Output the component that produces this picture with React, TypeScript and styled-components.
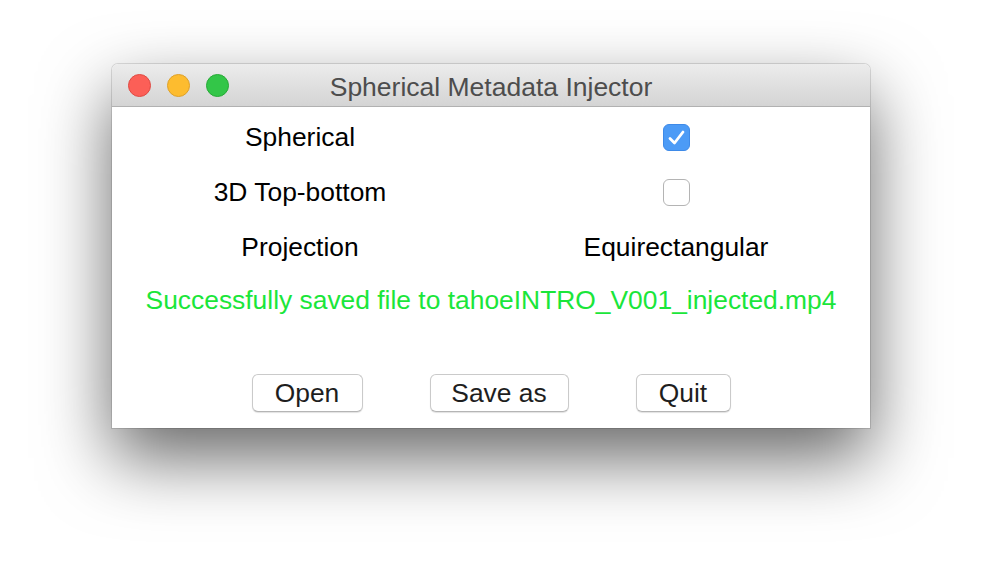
import React from "react";
import styled, { createGlobalStyle } from "styled-components";

const Global = createGlobalStyle`
  html, body { margin: 0; padding: 0; background: #ffffff; }
  body { font-family: "Liberation Sans", Arial, sans-serif; }
`;

const Page = styled.div`
  width: 982px;
  height: 588px;
  padding: 64px 0 0 112px;
  box-sizing: border-box;
  background: #ffffff;
  overflow: hidden;
`;

const Window = styled.div`
  width: 758px;
  height: 364px;
  display: flex;
  flex-direction: column;
  border-radius: 6px 6px 0 0;
  background: #ffffff;
  box-shadow: 0 0 0 1px rgba(0, 0, 0, 0.12), 0 30px 70px rgba(0, 0, 0, 0.6);
`;

const TitleBar = styled.div`
  height: 42px;
  flex: none;
  display: flex;
  align-items: center;
  position: relative;
  border-radius: 6px 6px 0 0;
  background: linear-gradient(#ececec, #d4d4d4);
  border-bottom: 1px solid #b1b1b1;
`;

const Lights = styled.div`
  display: flex;
  gap: 16px;
  padding-left: 16px;
`;

const Light = styled.span<{ $fill: string; $edge: string }>`
  width: 23px;
  height: 23px;
  border-radius: 50%;
  background: ${(p) => p.$fill};
  border: 1px solid ${(p) => p.$edge};
  box-sizing: border-box;
`;

const Title = styled.div`
  position: absolute;
  left: 0;
  right: 0;
  top: 8px;
  text-align: center;
  font-size: 26.5px;
  color: #4d4d4d;
  pointer-events: none;
`;

const Body = styled.div`
  flex: 1;
  display: flex;
  flex-direction: column;
  padding-top: 3px;
`;

const Grid = styled.div`
  display: grid;
  grid-template-columns: 376px 376px;
  grid-auto-rows: 55px;
  align-items: center;
  justify-items: center;
  font-size: 26.4px;
  color: #000000;
`;

const Label = styled.div``;

const Box = styled.div<{ $checked?: boolean }>`
  width: 27px;
  height: 27px;
  box-sizing: border-box;
  border-radius: 6px;
  display: flex;
  align-items: center;
  justify-content: center;
  background: ${(p) => (p.$checked ? "#4c9bf6" : "#ffffff")};
  border: 1px solid ${(p) => (p.$checked ? "#3e8ae8" : "#b4b4b4")};
`;

const Status = styled.div`
  height: 50px;
  display: flex;
  align-items: center;
  justify-content: center;
  font-size: 26.4px;
  color: #1ae63a;
`;

const Buttons = styled.div`
  margin-top: 49px;
  display: flex;
  justify-content: center;
  gap: 67px;
`;

const Button = styled.button<{ $w: number }>`
  width: ${(p) => p.$w}px;
  height: 38px;
  padding: 0;
  box-sizing: border-box;
  border-radius: 6px;
  border: 1px solid #cacaca;
  border-bottom-color: #b5b5b5;
  background: #ffffff;
  box-shadow: 0 1px 1px rgba(0, 0, 0, 0.12);
  font-family: "Liberation Sans", Arial, sans-serif;
  font-size: 26.4px;
  color: #1e1e1e;
  line-height: 1;
`;

const Check = () => (
  <svg width="19" height="17" viewBox="0 0 19 17">
    <path d="M3 9.5 L7.5 14 L16 3" fill="none" stroke="#ffffff" strokeWidth="2.8" strokeLinecap="round" strokeLinejoin="round" />
  </svg>
);

export default function App() {
  return (
    <>
      <Global />
      <Page>
        <Window>
          <TitleBar>
            <Lights>
              <Light $fill="#fc5f57" $edge="#df4a43" />
              <Light $fill="#fdbc2f" $edge="#dea12a" />
              <Light $fill="#33c648" $edge="#27aa36" />
            </Lights>
            <Title>Spherical Metadata Injector</Title>
          </TitleBar>
          <Body>
            <Grid>
              <Label>Spherical</Label>
              <Box $checked>
                <Check />
              </Box>
              <Label>3D Top-bottom</Label>
              <Box />
              <Label>Projection</Label>
              <Label>Equirectangular</Label>
            </Grid>
            <Status>Successfully saved file to tahoeINTRO_V001_injected.mp4</Status>
            <Buttons>
              <Button $w={111}>Open</Button>
              <Button $w={139}>Save as</Button>
              <Button $w={95}>Quit</Button>
            </Buttons>
          </Body>
        </Window>
      </Page>
    </>
  );
}
